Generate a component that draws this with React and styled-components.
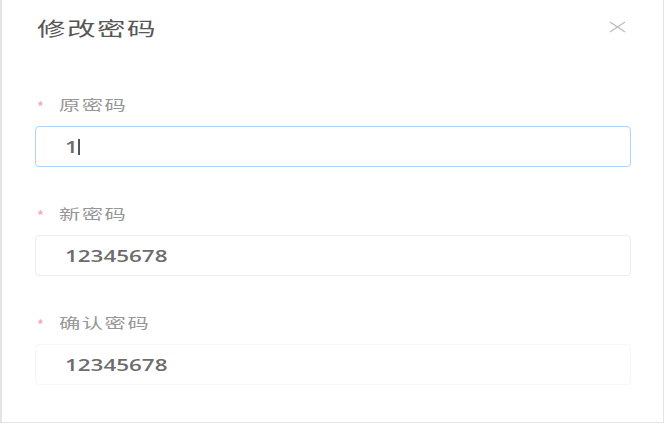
import React from 'react';
import styled, { createGlobalStyle } from 'styled-components';

const GlobalStyle = createGlobalStyle`
  html, body {
    margin: 0;
    padding: 0;
    background: #ffffff;
  }
  body {
    font-family: "Noto Sans CJK SC", "Noto Sans", sans-serif;
  }
`;

// the shot is stretched sideways, so text is widened with scaleX
const Dialog = styled.div`
  box-sizing: border-box;
  width: 664px;
  height: 423px;
  background: #fff;
  border: 1px solid #e4e4e4;
  border-top: none;
  border-left-width: 2px;
`;

const Header = styled.div`
  height: 54px;
  display: flex;
  align-items: center;
  justify-content: space-between;
  padding: 0 37px 0 35px;
`;

const Title = styled.h2`
  margin: 0;
  font-size: 19px;
  font-weight: 400;
  letter-spacing: 1px;
  color: #575757;
  line-height: 1;
  transform: scaleX(1.5);
  transform-origin: left center;
`;

const CloseButton = styled.button`
  border: none;
  background: none;
  padding: 0;
  width: 18px;
  height: 14px;
  display: flex;
  align-items: center;
  justify-content: center;
  cursor: pointer;
`;

const Form = styled.form`
  padding: 39px 32px 0 33px;
  display: flex;
  flex-direction: column;
  gap: 35px;
`;

const Item = styled.div`
  display: flex;
  flex-direction: column;
  gap: 11px;
`;

const Label = styled.label`
  height: 22px;
  display: flex;
  align-items: center;
  font-size: 14px;
  color: #979797;
`;

const LabelText = styled.span`
  display: inline-block;
  letter-spacing: 1px;
  transform: scaleX(1.52);
  transform-origin: left center;
`;

const Star = styled.span`
  width: 22px;
  padding-left: 2px;
  color: #f5a3ab;
  font-size: 15px;
  line-height: 1;
  margin-top: 5px;
`;

const Field = styled.div`
  box-sizing: border-box;
  height: 41px;
  display: flex;
  align-items: center;
  padding-left: 29px;
  border: 1.5px solid ${p => p.$tone};
  border-radius: 4px;
  font-family: "Open Sans", "DejaVu Sans", sans-serif;
  font-size: 16px;
  font-weight: 600;
  color: #6c6c6c;
`;

const Value = styled.span`
  display: inline-block;
  transform: scaleX(1.4);
  transform-origin: left center;
`;

const Caret = styled.span`
  display: inline-block;
  width: 1.5px;
  height: 16px;
  background: #555;
  margin-left: 4px;
`;

const fields = [
  { label: '原密码', value: '1', tone: '#aed5fb', focused: true },
  { label: '新密码', value: '12345678', tone: '#ededed' },
  { label: '确认密码', value: '12345678', tone: '#f7f7f7' },
];

export default function App() {
  return (
    <>
      <GlobalStyle />
      <Dialog>
        <Header>
          <Title>修改密码</Title>
          <CloseButton type="button" aria-label="关闭">
            <svg width="17" height="12" viewBox="0 0 17 12">
              <path d="M1 1 L16 11 M16 1 L1 11" stroke="#bdbdbd" strokeWidth="1.4" fill="none" />
            </svg>
          </CloseButton>
        </Header>
        <Form>
          {fields.map(f => (
            <Item key={f.label}>
              <Label>
                <Star>*</Star>
                <LabelText>{f.label}</LabelText>
              </Label>
              <Field $tone={f.tone}>
                <Value>{f.value}</Value>
                {f.focused && <Caret />}
              </Field>
            </Item>
          ))}
        </Form>
      </Dialog>
    </>
  );
}
